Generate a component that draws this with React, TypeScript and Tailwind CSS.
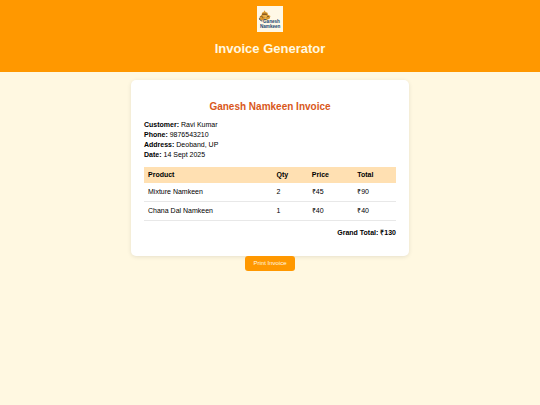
import { cva } from "class-variance-authority";

type Item = {
  name: string;
  qty: number;
  price: number;
};

const customer = [
  { label: "Customer", value: "Ravi Kumar" },
  { label: "Phone", value: "9876543210" },
  { label: "Address", value: "Deoband, UP" },
  { label: "Date", value: "14 Sept 2025" },
];

const items: Item[] = [
  { name: "Mixture Namkeen", qty: 2, price: 45 },
  { name: "Chana Dal Namkeen", qty: 1, price: 40 },
];

const cell = cva("px-1 text-left", {
  variants: {
    head: {
      true: "h-4 bg-[#ffe0b2] font-bold",
      false: "h-[19px] border-b border-[#e8e8e8]",
    },
  },
});

const Logo = () => {
  return (
    <svg
      viewBox="0 0 26 26"
      className="size-[26px]"
      role="img"
      aria-label="Ganesh Namkeen"
    >
      <rect width="26" height="26" fill="#fff8e6" />
      {/* crown and ears */}
      <path
        d="M7.5 4.2 8.6 6 10.5 6.8 11 8.8 13.4 10 12.8 12.6 10.8 13.4 9 14.2 5 14.2 2.2 13.2 2.8 10.4 4.6 9 5 6.8 6.6 6Z"
        fill="#d9982f"
      />
      <path d="M5.4 7.4h4.2l.4 1.6H5Z" fill="#8a5b22" />
      <path
        d="M3.4 10.6c1.6-.8 2.4.2 2.4 1.6M12 10.6c-1.6-.8-2.6.2-2.4 1.4"
        fill="none"
        stroke="#6f4c28"
        strokeWidth=".8"
      />
      {/* face and trunk */}
      <path
        d="M6.2 10h3l-.2 1.8c-.1 1.3-1 1.6-2 1.2"
        fill="none"
        stroke="#f5c766"
        strokeWidth="1"
      />
      <path
        d="M2.4 12.4c.2 1.4 1.2 2.4 3 2.6"
        fill="none"
        stroke="#35404e"
        strokeWidth="1"
      />
      <g
        fill="#20466f"
        fontFamily="Liberation Sans, Arial, sans-serif"
        fontWeight="bold"
        fontSize="4.6"
      >
        <text x="6" y="16.8">
          Ganesh
        </text>
        <text x="3" y="21.8">
          Namkeen
        </text>
      </g>
    </svg>
  );
};

const App = () => {
  const total = items.reduce((sum, item) => sum + item.qty * item.price, 0);

  return (
    <div className="min-h-screen bg-[#fff8e1] font-['Liberation_Sans',Arial,sans-serif] text-[7px] leading-[10px] text-black">
      <header className="flex flex-col items-center gap-2 bg-[#ff9800] pt-1.5 pb-[15px] text-[#fff8e1]">
        <Logo />
        <h1 className="text-[13px] leading-[17px] font-bold">
          Invoice Generator
        </h1>
      </header>

      <main className="flex flex-col items-center px-4 pt-2">
        <section className="w-full max-w-[278px] rounded-[5px] bg-white px-[13px] pt-5 pb-[18px] shadow-[0_1px_4px_rgba(0,0,0,0.1)]">
          <h2 className="mb-1.5 text-center text-[10px] leading-[14px] font-bold text-[#d9581a]">
            Ganesh Namkeen Invoice
          </h2>

          {customer.map((row) => (
            <p key={row.label}>
              <strong>{row.label}:</strong> {row.value}
            </p>
          ))}

          <table className="mt-[7px] w-full table-fixed border-separate border-spacing-0">
            <colgroup>
              <col className="w-[51%]" />
              <col className="w-[14%]" />
              <col className="w-[18%]" />
              <col className="w-[17%]" />
            </colgroup>
            <thead>
              <tr>
                <th className={cell({ head: true })}>Product</th>
                <th className={cell({ head: true })}>Qty</th>
                <th className={cell({ head: true })}>Price</th>
                <th className={cell({ head: true })}>Total</th>
              </tr>
            </thead>
            <tbody>
              {items.map((item) => (
                <tr key={item.name}>
                  <td className={cell({ head: false })}>{item.name}</td>
                  <td className={cell({ head: false })}>{item.qty}</td>
                  <td className={cell({ head: false })}>₹{item.price}</td>
                  <td className={cell({ head: false })}>
                    ₹{item.qty * item.price}
                  </td>
                </tr>
              ))}
            </tbody>
          </table>

          <p className="mt-[7px] text-right font-bold">Grand Total: ₹{total}</p>
        </section>

        <button
          type="button"
          onClick={() => window.print()}
          className="cursor-pointer rounded-[3px] bg-[#ff9800] px-2 py-1 text-[6px] leading-[7px] text-[#fff8e1]"
        >
          Print Invoice
        </button>
      </main>
    </div>
  );
};

export default App;
